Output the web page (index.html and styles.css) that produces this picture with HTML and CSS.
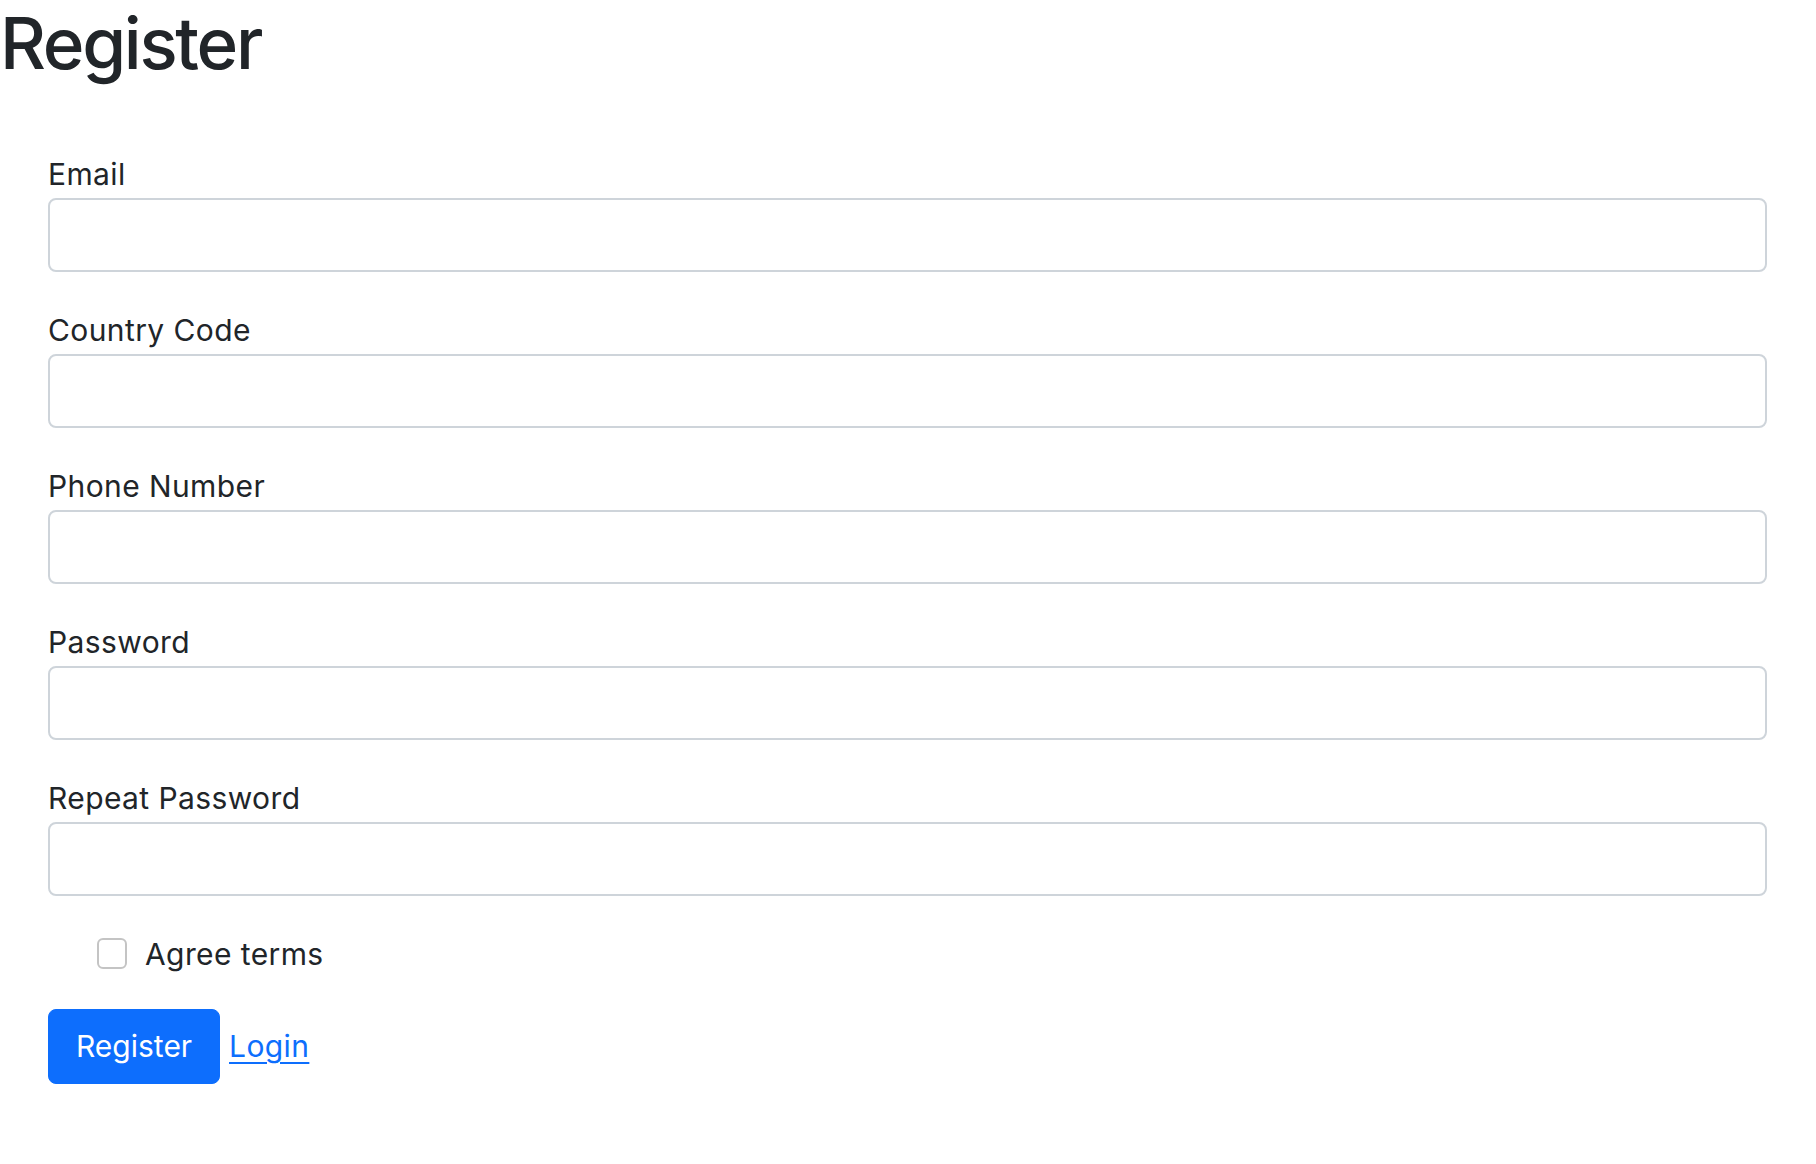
FILE: index.html
```html
<!DOCTYPE html>
<html lang="en">
<head>
<meta charset="utf-8">
<title>Register</title>
<link rel="stylesheet" href="styles.css">
</head>
<body>
<h1 class="title">Register</h1>
<form class="form">
  <div class="field">
    <label class="field-label" for="email">Email</label>
    <input class="field-input" id="email" type="email">
  </div>
  <div class="field">
    <label class="field-label" for="cc">Country Code</label>
    <input class="field-input" id="cc" type="text">
  </div>
  <div class="field">
    <label class="field-label" for="phone">Phone Number</label>
    <input class="field-input" id="phone" type="text">
  </div>
  <div class="field">
    <label class="field-label" for="pw">Password</label>
    <input class="field-input" id="pw" type="password">
  </div>
  <div class="field">
    <label class="field-label" for="pw2">Repeat Password</label>
    <input class="field-input" id="pw2" type="password">
  </div>
  <div class="check">
    <span class="check-box"></span>
    <label class="check-label">Agree terms</label>
  </div>
  <div class="actions">
    <button class="btn" type="button">Register</button> <a class="link" href="#">Login</a>
  </div>
</form>
</body>
</html>
```
FILE: styles.css
```css
html, body {
  margin: 0;
  padding: 0;
  background: #ffffff;
}
body {
  font-family: Inter, "Liberation Sans", sans-serif;
  color: #212529;
  font-size: 30px;
  line-height: 45px;
  letter-spacing: 0.4px;
}
.title {
  margin: 0;
  font-size: 71px;
  line-height: 86px;
  font-weight: 500;
  letter-spacing: -2.3px;
}
.form {
  margin: 66px 49px 0 48px;
}
.field {
  margin-bottom: 36px;
}
.field-label {
  display: block;
  margin-bottom: 1px;
}
.field-input {
  display: block;
  box-sizing: border-box;
  width: 100%;
  height: 74px;
  border: 2px solid #ced4da;
  border-radius: 8px;
  background: #fff;
  font: inherit;
  padding: 0 22px;
  margin: 0;
}
.check {
  display: flex;
  align-items: center;
  padding-left: 49px;
  height: 45px;
}
.check-box {
  box-sizing: border-box;
  width: 30px;
  height: 31px;
  border: 2px solid #c4c4c4;
  border-radius: 6px;
  margin-top: -3px;
  margin-right: 18px;
}
.actions {
  margin-top: 32px;
}
.btn {
  display: inline-block;
  box-sizing: border-box;
  height: 75px;
  padding: 0 27px;
  border: 1px solid #0d6efd;
  background: #0d6efd;
  color: #ffffff;
  border-radius: 8px;
  font: inherit;
  line-height: 45px;
  vertical-align: baseline;
}
.link {
  color: #0d6efd;
  text-decoration: underline;
  text-decoration-thickness: 2px;
  text-underline-offset: 5px;
}
```
